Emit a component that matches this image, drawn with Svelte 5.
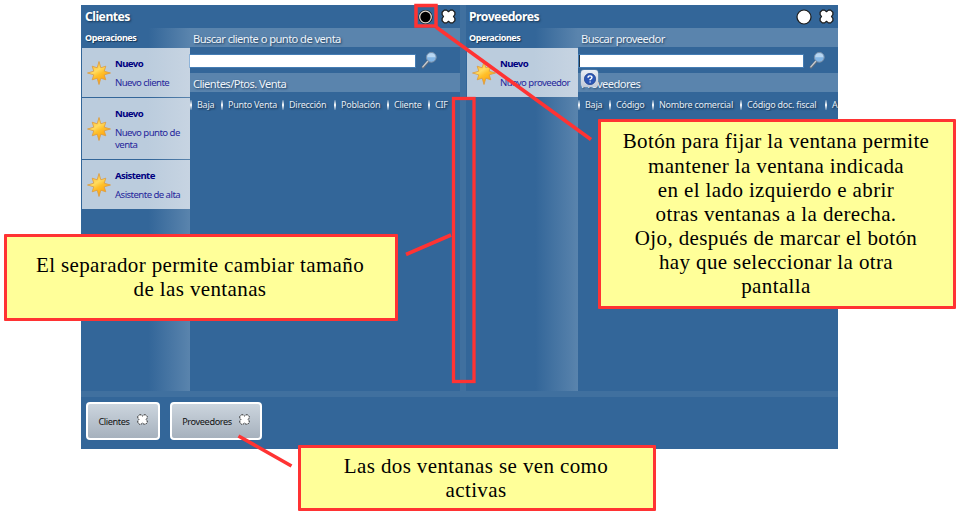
<script>
  const windows = [
    {
      id: 'left',
      title: 'Clientes',
      fixed: true,
      search: 'Buscar cliente o punto de venta',
      list: 'Clientes/Ptos. Venta',
      ops: [
        { name: 'Nuevo', text: 'Nuevo cliente', height: 49 },
        { name: 'Nuevo', text: 'Nuevo punto de venta', height: 61 },
        { name: 'Asistente', text: 'Asistente de alta', height: 49 }
      ],
      columns: [
        { label: 'Baja', width: 31 },
        { label: 'Punto Venta', width: 61 },
        { label: 'Dirección', width: 52 },
        { label: 'Población', width: 53 },
        { label: 'Cliente', width: 41 },
        { label: 'CIF', width: 30 }
      ]
    },
    {
      id: 'right',
      title: 'Proveedores',
      fixed: false,
      search: 'Buscar proveedor',
      list: 'Proveedores',
      ops: [{ name: 'Nuevo', text: 'Nuevo proveedor', height: 49 }],
      columns: [
        { label: 'Baja', width: 31 },
        { label: 'Código', width: 43 },
        { label: 'Nombre comercial', width: 88 },
        { label: 'Código doc. fiscal', width: 85 },
        { label: 'A', width: 13 }
      ]
    }
  ];
  const tasks = [
    { label: 'Clientes', width: 74 },
    { label: 'Proveedores', width: 92 }
  ];
  const notes = [
    { id: 'n1', lines: ['El separador permite cambiar tamaño', 'de las ventanas'] },
    {
      id: 'n2',
      lines: [
        'Botón para fijar la ventana permite',
        'mantener la ventana indicada',
        'en el lado izquierdo e abrir',
        'otras ventanas a la derecha.',
        'Ojo, después de marcar el botón',
        'hay que seleccionar la otra',
        'pantalla'
      ]
    },
    { id: 'n3', lines: ['Las dos ventanas se ven como', 'activas'] }
  ];
</script>

{#snippet cross(size)}
  <svg class="cross" width={size} height={size} viewBox="0 0 16 16">
    <path d="M3.500 1.200 H6 L8 2.900 L10 1.200 H12.500 L14.800 3.500 V6 L13.300 8 L14.800 10 V12.500 L12.500 14.800 H10 L8 13.100 L6 14.800 H3.500 L1.200 12.500 V10 L2.700 8 L1.200 6 V3.500 Z" />
  </svg>
{/snippet}

<div class="page">
  <div class="app">
    <div class="windows">
      {#each windows as w, i (w.id)}
        {#if i}<div class="splitter"></div>{/if}
        <section class={w.id}>
          <header>
            <h1>{w.title}</h1>
            <svg class="pin" width="16" height="16" viewBox="0 0 16 16">
              {#if w.fixed}
                <circle cx="7.500" cy="8" r="6.300" fill="#000" stroke="#151515" stroke-width="1.600" />
                <circle cx="7.500" cy="8" r="5.800" fill="#000" stroke="#ddd8d0" stroke-width="1.300" />
              {:else}
                <circle cx="8" cy="8" r="7" fill="#fff" stroke="#1b1b1b" stroke-width="1.200" />
              {/if}
            </svg>
            {@render cross(15)}
          </header>
          <div class="body">
            <aside>
              <h2>Operaciones</h2>
              {#each w.ops as op}
                <div class="op" style="height: {op.height}px">
                  <svg width="24" height="24" viewBox="0 0 24 24">
                    <defs>
                      <linearGradient id="sun" x1="0.1" y1="0" x2="0.7" y2="1">
                        <stop offset="0" stop-color="#ffad1f" />
                        <stop offset=".42" stop-color="#ffdc60" />
                        <stop offset=".6" stop-color="#ffc02a" />
                        <stop offset="1" stop-color="#ff9a08" />
                      </linearGradient>
                    </defs>
                    <path
                      d="M12 .5 L13.800 6.800 L18.800 5.200 L17.200 10.200 L23.500 12 L17.200 13.800 L18.800 18.800 L13.800 17.200 L12 23.500 L10.200 17.200 L5.200 18.800 L6.800 13.800 L.5 12 L6.800 10.200 L5.200 5.200 L10.200 6.800 Z"
                      fill="url(#sun)" stroke="#dd9a3c" stroke-width=".8" stroke-linejoin="round" />
                  </svg>
                  <div><b>{op.name}</b><p>{op.text}</p></div>
                </div>
              {/each}
            </aside>
            <main>
              <div class="band">{w.search}</div>
              <div class="search">
                <div class="input"></div>
                <svg width="17" height="18" viewBox="0 0 17 18">
                  <path d="M7 10.500 L2 16.200" stroke="#68717d" stroke-width="2.600" stroke-linecap="round" />
                  <path d="M6.500 10.500 L1.800 15.900" stroke="#c9ced4" stroke-width="1.200" stroke-linecap="round" />
                  <circle cx="10.300" cy="6.300" r="4.900" fill="#83b6e6" stroke="#7d91a8" stroke-width="1" />
                  <path d="M6.200 6.300 A4.100 4.100 0 0 1 14.400 6.300 Z" fill="#b8d6f1" />
                </svg>
              </div>
              <div class="band">{w.list}</div>
              <div class="cols">
                {#each w.columns as c}
                  <span style="width: {c.width}px"><i></i>{c.label}</span>
                {/each}
              </div>
            </main>
          </div>
          {#if w.id === 'right'}
            <div class="help">
              <svg width="12" height="12" viewBox="0 0 11 11">
                <circle cx="5.500" cy="5.500" r="5.200" fill="#2c56b5" stroke="#183a86" stroke-width=".6" />
                <path d="M3.700 4.300 Q3.700 2.600 5.500 2.600 Q7.300 2.600 7.300 4.100 Q7.300 5 5.600 6 L5.600 6.700 M5.600 7.700 V8.800" fill="none" stroke="#fff" stroke-width="1.300" />
              </svg>
            </div>
          {/if}
        </section>
      {/each}
    </div>
    <div class="strip"></div>
    <footer>
      {#each tasks as t}
        <div class="task" style="width: {t.width}px"><span>{t.label}</span>{@render cross(11)}</div>
      {/each}
    </footer>
  </div>

  {#each notes as n (n.id)}
    <div class="note {n.id}">
      {#each n.lines as line}<div>{line}</div>{/each}
    </div>
  {/each}

  <svg class="marks" width="959" height="516" fill="none" stroke="#ff3333">
    <rect x="416" y="5.500" width="20" height="20.500" stroke-width="3.500" />
    <rect x="453.500" y="98.500" width="20.500" height="283" stroke-width="3.300" />
    <path d="M436 27 L591 139.500 M406 254.500 L451 235 M238.500 436 L291.500 466" stroke-width="3.600" />
  </svg>
</div>

<style>
  .page { position: relative; width: 959px; height: 516px; overflow: hidden; background: #fff; padding: 5px 0 0 81px; box-sizing: border-box; }
  .app { width: 757px; height: 444px; background: #336699; font-family: "Noto Sans", "Open Sans", sans-serif; display: flex; flex-direction: column; }
  .windows { display: flex; height: 386px; }
  section { position: relative; display: flex; flex-direction: column; overflow: hidden; }
  .left { width: 379px; }
  .right { width: 372px; }
  .splitter { width: 6px; background: #40709f; }
  header { height: 23px; display: flex; align-items: center; padding: 0 4px; box-sizing: border-box; }
  .right header { padding-left: 3px; }
  h1 { flex: 1; margin: 0; font-size: 12.2px; line-height: 23px; letter-spacing: -.5px; color: #fff; text-shadow: 1px 1px 2px #143352; }
  .pin { margin-right: 7px; }
  .cross { fill: #fff; stroke: #1b1b1b; stroke-width: 1.3; stroke-linejoin: round; }
  .body { flex: 1; display: flex; }
  aside { width: 109px; background: linear-gradient(90deg, #336699 62%, #5a84ad); }
  .right aside { width: 112px; }
  h2 { margin: 0; height: 20px; padding-left: 4px; font-size: 9px; line-height: 19px; letter-spacing: -.43px; color: #fff; text-shadow: 1px 1px 1px #143352; }
  .right h2 { padding-left: 3px; }
  .op { display: flex; align-items: center; gap: 4px; margin: 0 0 1px 1px; padding-left: 5px; box-sizing: border-box; background: linear-gradient(90deg, #bbccdd 60%, #c7d4e2); color: #000080; }
  .op svg { flex: none; }
  .op div { align-self: flex-start; padding-top: 8px; font-size: 9.6px; line-height: 12px; }
  .op b { display: block; line-height: 15px; letter-spacing: -.6px; }
  .op p { margin: 6px 0 0; color: #26269b; letter-spacing: -.55px; }
  main { flex: 1; min-width: 0; display: flex; flex-direction: column; }
  .band { height: 19px; padding-left: 3px; background: #5a84ad; color: #eef4fa; font-size: 11.2px; line-height: 21px; letter-spacing: -.58px; white-space: nowrap; text-shadow: 1px 1px 2px #1d3e60; }
  .search { height: 26px; display: flex; align-items: center; gap: 6px; }
  .input { width: 225px; height: 12px; margin-top: 1px; background: #fff; box-shadow: 0 0 0 1px #5793cf80; }
  .right .input { margin-left: 1px; width: 224px; border-left: 1px solid #234; box-sizing: border-box; }
  .cols { display: flex; padding-top: 6px; overflow: hidden; color: #e4edf6; font-size: 9px; line-height: 13px; letter-spacing: -.25px; white-space: nowrap; text-shadow: 1px 1px 2px #10263d; }
  .cols span { flex: none; display: flex; align-items: center; gap: 5.500px; }
  .cols i { width: 1.5px; height: 10px; background: linear-gradient(#ffffff20, #fff, #ffffff20); }
  .help { position: absolute; left: 115px; top: 65px; width: 17px; height: 17px; display: flex; align-items: center; justify-content: center; box-sizing: border-box; border-radius: 3px; background: linear-gradient(#e9edf4, #c2cad8); box-shadow: 0 0 1px #fff; }
  .strip { height: 6px; background: #40709f; }
  footer { flex: 1; display: flex; gap: 10px; padding: 5px; }
  .task { height: 38px; display: flex; align-items: center; justify-content: center; gap: 7px; box-sizing: border-box; border: 2px solid #fff; border-radius: 4px; background: linear-gradient(#ccd5de, #a6b1bd); color: #111; font-size: 9.2px; letter-spacing: -.4px; }
  .task .cross { margin-top: -3px; stroke-dasharray: 3 1; }
  .note { position: absolute; display: flex; flex-direction: column; justify-content: center; box-sizing: border-box; border: 3.5px solid #ff3333; border-radius: 1px; background: #ffff99; font-family: "Liberation Serif", serif; font-size: 21px; line-height: 24.15px; letter-spacing: .38px; color: #000; text-align: center; white-space: nowrap; padding-right: 2px; }
  .n1 { left: 4px; top: 234px; width: 394px; height: 87px; padding-bottom: 1px; }
  .n2 { left: 598px; top: 119px; width: 358px; height: 190px; }
  .n3 { left: 298px; top: 445px; width: 358px; height: 66px; }
  .marks { position: absolute; left: 0; top: 0; }
</style>
